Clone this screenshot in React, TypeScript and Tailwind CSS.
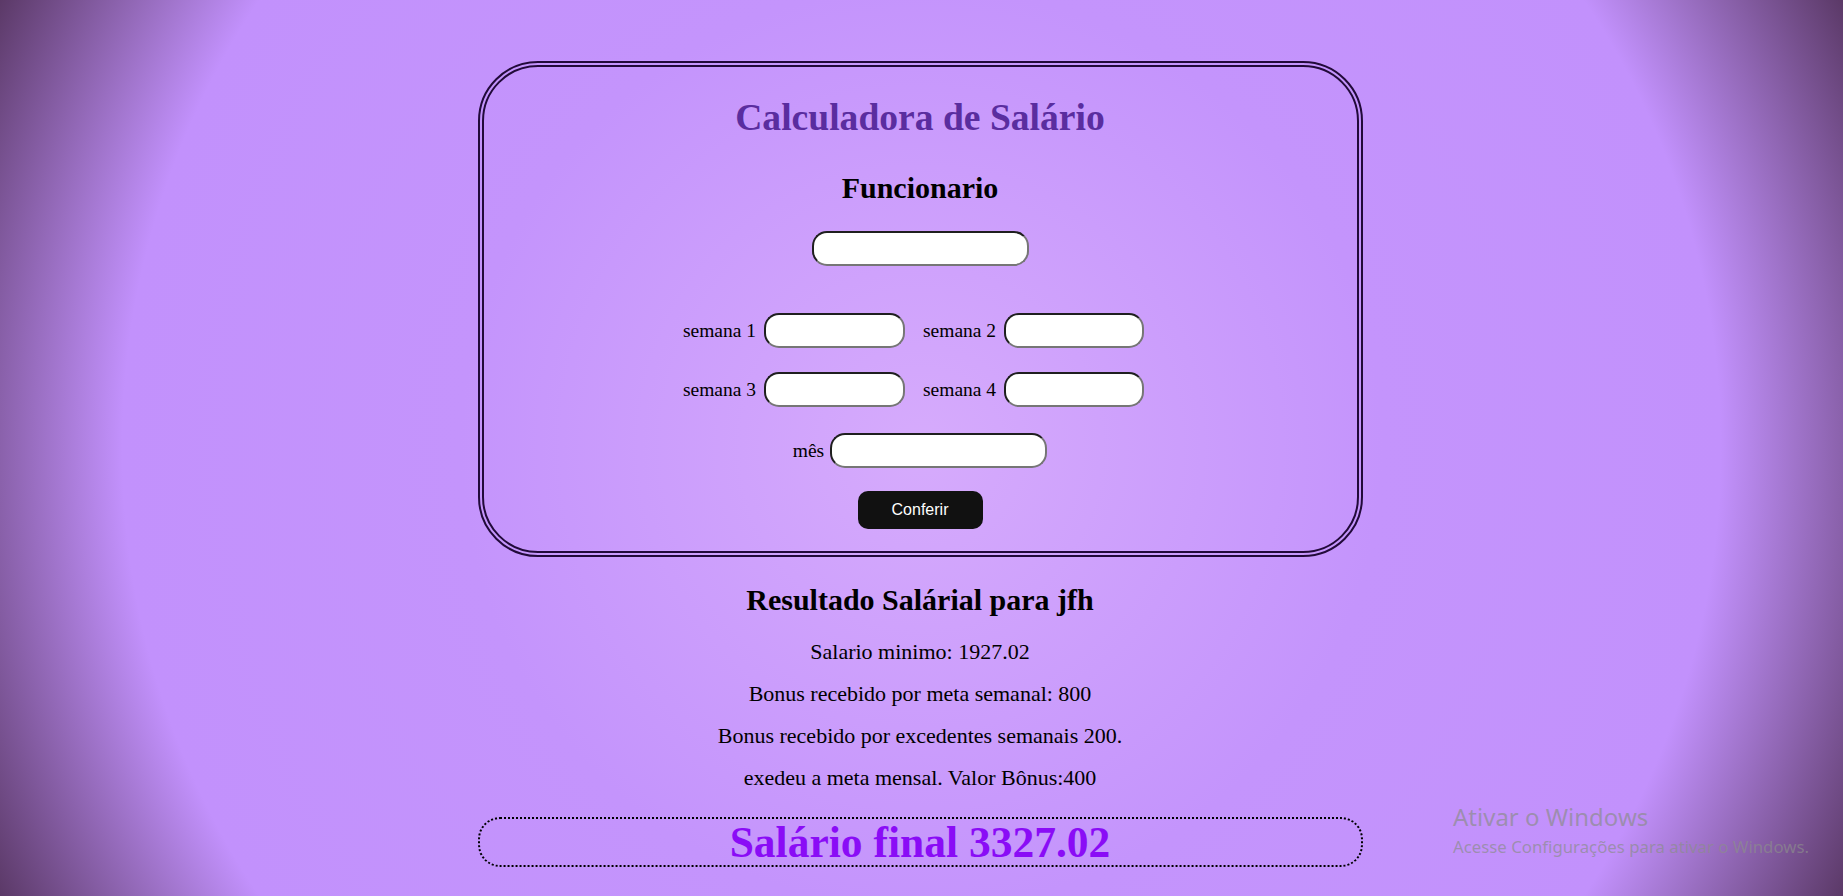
export default function App() {
  return (
    <div className="relative h-[896px] w-full overflow-hidden bg-[radial-gradient(circle,#d6abfc_0%,#c494fc_45%,#c291fc_78%,#5b3967_100%)] font-['Liberation_Serif',serif] text-black">
      <div className="flex flex-col items-center pt-[61px] pr-[3px]">
        <SalaryForm />
        <Result />
      </div>
      <ActivateWindows />
    </div>
  )
}

function SalaryForm() {
  return (
    <form
      className="flex w-[885px] flex-col items-center rounded-[60px] border-[6px] border-double border-[#220a3a] pt-[29px] pb-[22px]"
      onSubmit={(e) => e.preventDefault()}
    >
      <h1 className="text-[37.6px] leading-[44px] font-bold text-[#5a2d9f]">
        Calculadora de Salário
      </h1>
      <h2 className="mt-[31px] text-[30px] leading-[34px] font-bold">Funcionario</h2>
      <Field className="mt-[26px] w-[217px]" />

      <div className="mt-[47px] flex items-center pr-[13px]">
        <Label text="semana 1" />
        <Field className="w-[141px]" />
        <div className="w-[18px]" />
        <Label text="semana 2" />
        <Field className="w-[140px]" />
      </div>
      <div className="mt-[24px] flex items-center pr-[13px]">
        <Label text="semana 3" />
        <Field className="w-[141px]" />
        <div className="w-[18px]" />
        <Label text="semana 4" />
        <Field className="w-[140px]" />
      </div>
      <div className="mt-[26px] flex items-center">
        <Label text="mês" gap="mr-[6px]" />
        <Field className="w-[217px]" />
      </div>

      <button
        type="submit"
        className="mt-[23px] h-[38px] w-[125px] rounded-[10px] bg-[#111111] font-['Liberation_Sans',Arial,sans-serif] text-[16px] text-white"
      >
        Conferir
      </button>
    </form>
  )
}

function Label({ text, gap = 'mr-[8px]' }: { text: string; gap?: string }) {
  return <span className={`${gap} text-[19.5px] leading-[22px]`}>{text}</span>
}

function Field({ className = '' }: { className?: string }) {
  return (
    <input
      type="text"
      className={`h-[35px] rounded-[15px] border-2 border-t-[#1f1f1f] border-l-[#1f1f1f] border-r-[#767676] border-b-[#767676] bg-white px-2 outline-none ${className}`}
    />
  )
}

function Result() {
  // valores fixos do cálculo mostrado
  const lines = [
    'Salario minimo: 1927.02',
    'Bonus recebido por meta semanal: 800',
    'Bonus recebido por excedentes semanais 200.',
    'exedeu a meta mensal. Valor Bônus:400',
  ]

  return (
    <div className="mt-[26px] flex flex-col items-center">
      <h2 className="text-[30px] leading-[34px] font-bold">Resultado Salárial para jfh</h2>
      <div className="mt-[14px] flex flex-col items-center">
        {lines.map((line) => (
          <p key={line} className="text-[22px] leading-[42px]">
            {line}
          </p>
        ))}
      </div>
      <div className="mt-[18px] flex h-[50px] w-[885px] items-center justify-center rounded-[22px] border-2 border-dotted border-black">
        <span className="text-[43.5px] leading-[46px] font-bold text-[#8a0cf6]">
          Salário final 3327.02
        </span>
      </div>
    </div>
  )
}

function ActivateWindows() {
  return (
    <div className="pointer-events-none absolute top-[801px] left-[1453px] font-['Noto_Sans',sans-serif] text-[#8c8c8c]/70">
      <p className="text-[24px] leading-[32px]">Ativar o Windows</p>
      <p className="mt-[2px] text-[16.8px] leading-[24px]">Acesse Configurações para ativar o Windows.</p>
    </div>
  )
}
